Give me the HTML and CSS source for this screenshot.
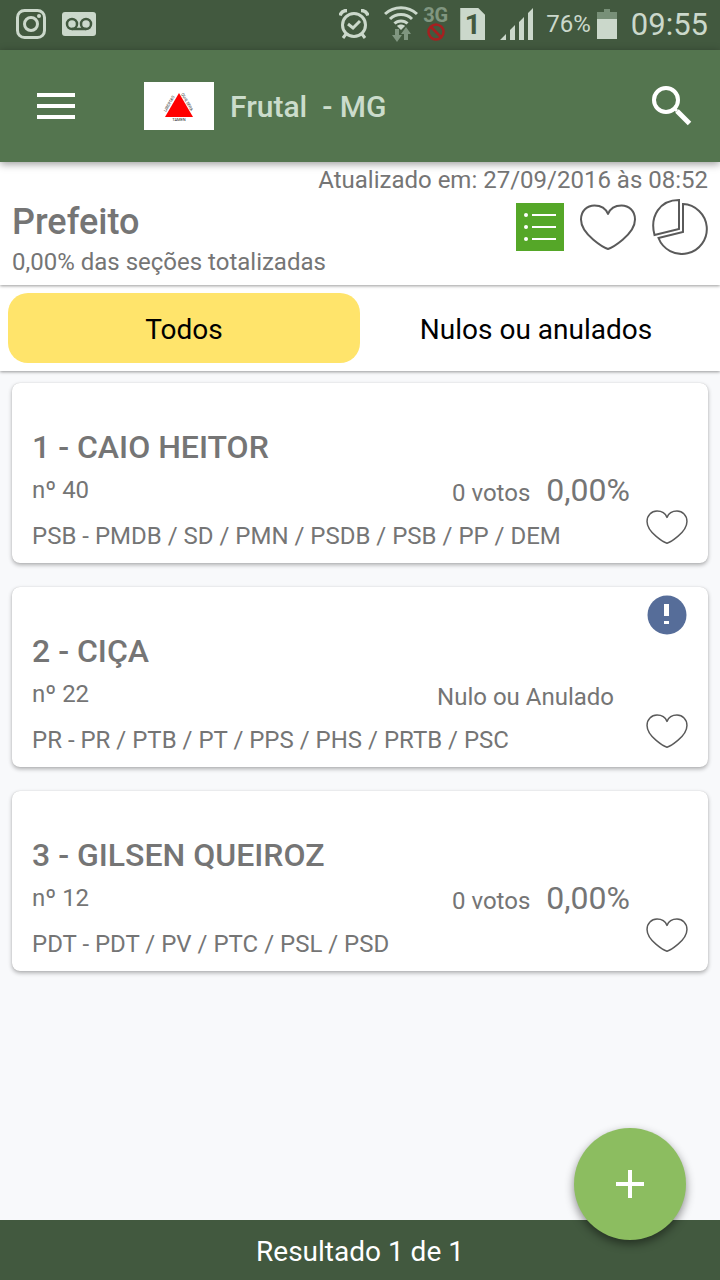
FILE: index.html
```html
<!DOCTYPE html>
<html lang="pt-BR">
<head>
    <meta charset="UTF-8">
    <meta name="viewport" content="width=device-width, initial-scale=1.0">
    <title>Frutal - MG</title>
    <link rel="stylesheet" href="styles.css">
</head>
<body>
    <svg width="0" height="0" class="defs">
        <symbol id="heart" viewBox="0 0 56 46">
            <path d="M28 45 C25 44 1 31 1 15.500 C1 7 7 1.500 14.500 1.500 C21 1.500 26 5 28 10 C30 5 35 1.500 41.500 1.500 C49 1.500 55 7 55 15.500 C55 31 31 44 28 45 Z" fill="none" stroke="#5a5a5a" stroke-width="2" stroke-linejoin="round"/>
        </symbol>
    </svg>

    <div class="status-bar">
        <div class="status-left">
            <svg width="30" height="30" viewBox="0 0 30 30" fill="none" stroke="#cbd8cb">
                <rect x="1.500" y="1.500" width="27" height="27" rx="7" stroke-width="3"/>
                <circle cx="15" cy="15" r="6.500" stroke-width="3"/>
                <circle cx="23" cy="7" r="2" fill="#cbd8cb" stroke="none"/>
            </svg>
            <svg width="34" height="24" viewBox="0 0 34 24" fill="none">
                <rect width="34" height="24" rx="3" fill="#cbd8cb"/>
                <g stroke="#42593f" stroke-width="2.500">
                    <circle cx="10" cy="12" r="5"/>
                    <circle cx="24" cy="12" r="5"/>
                    <path d="M10 17 H24"/>
                </g>
            </svg>
        </div>
        <div class="status-right">
            <svg class="alarm" width="30" height="30" viewBox="0 0 30 30" fill="none" stroke="#cbd8cb" stroke-width="3">
                <circle cx="15" cy="16" r="11.500"/>
                <path d="M9 15 L14 19 L21 12"/>
                <path d="M1 6.500 C2 3.500 4.500 1.500 8 1.500 M29 6.500 C28 3.500 25.500 1.500 22 1.500" stroke-width="3.500"/>
                <path d="M7 25 L4 29 M23 25 L26 29"/>
            </svg>
            <svg class="wifi" width="34" height="36" viewBox="0 0 34 36" fill="none" stroke="#cbd8cb" stroke-width="3">
                <path d="M1 8 C10 -0.500 24 -0.500 33 8"/>
                <path d="M6 13 C12 7 22 7 28 13"/>
                <path d="M10.500 17.500 C14 14 20 14 23.500 17.500"/>
                <path d="M13 20 C15 18 19 18 21 20 L17 24 Z" fill="#cbd8cb" stroke="none"/>
                <path d="M11 23 V29 H8 L13 36 L18 29 H15 V23 Z M20 34 V28 H17 L22 21 L27 28 H24 V34 Z" fill="#809680" stroke="none"/>
            </svg>
            <div class="network">
                <span>3G</span>
                <svg width="18" height="18" viewBox="0 0 18 18" fill="none" stroke="#a52020" stroke-width="2.500">
                    <circle cx="9" cy="9" r="7.500"/>
                    <path d="M4 4 L14 14"/>
                </svg>
            </div>
            <div class="sim">1</div>
            <svg class="signal" width="34" height="32" viewBox="0 0 34 32" fill="#cbd8cb">
                <path d="M0 32 L6 26 V32 Z M10 22 L15 17 V32 H10 Z M19 14 L24 9 V32 H19 Z M28 5 L33 0 V32 H28 Z"/>
            </svg>
            <span class="battery-level">76%</span>
            <svg class="battery" width="20" height="30" viewBox="0 0 20 30">
                <path d="M0 3 H7 V0 H13 V3 H20 V10 H0 Z" fill="#789078"/>
                <rect y="10" width="20" height="20" fill="#cbd8cb"/>
            </svg>
            <span class="clock">09:55</span>
        </div>
    </div>

    <header class="app-bar">
        <button class="icon-button" aria-label="Menu">
            <svg width="38" height="26" viewBox="0 0 38 26" fill="#fff">
                <path d="M0 0 H38 V4 H0 Z M0 11 H38 V15 H0 Z M0 22 H38 V26 H0 Z"/>
            </svg>
        </button>
        <svg class="flag" width="70" height="48" viewBox="0 0 70 48">
            <rect width="70" height="48" fill="#fff"/>
            <path d="M35 11 L49 35 H21 Z" fill="#f00"/>
            <text x="35" y="39" text-anchor="middle" class="motto">TAMEN</text>
            <text transform="translate(22 30) rotate(-60)" class="motto">LIBERTAS</text>
            <text transform="translate(37 12) rotate(60)" class="motto">QUÆ SERA</text>
        </svg>
        <h1 class="city">Frutal  - MG</h1>
        <button class="icon-button search" aria-label="Buscar">
            <svg width="40" height="40" viewBox="0 0 40 40" fill="none" stroke="#fff">
                <circle cx="14" cy="14" r="12" stroke-width="4"/>
                <path d="M22 22 L25 25" stroke-width="3"/>
                <path d="M25 25 L37.500 37.500" stroke-width="5"/>
            </svg>
        </button>
    </header>

    <section class="summary">
        <p class="updated">Atualizado em: 27/09/2016 às 08:52</p>
        <div class="summary-row">
            <div>
                <h2 class="office">Prefeito</h2>
                <p class="sections">0,00% das seções totalizadas</p>
            </div>
            <div class="views">
                <button class="icon-button" aria-label="Lista">
                    <svg width="48" height="48" viewBox="0 0 48 48">
                        <rect width="48" height="48" fill="#55a728"/>
                        <g fill="#fff">
                            <circle cx="10" cy="12" r="2"/>
                            <circle cx="10" cy="24" r="2"/>
                            <circle cx="10" cy="36" r="2"/>
                            <path d="M16 11 H40 V13 H16 Z M16 23 H40 V25 H16 Z M16 35 H40 V37 H16 Z"/>
                        </g>
                    </svg>
                </button>
                <button class="icon-button" aria-label="Favoritos">
                    <svg width="56" height="46"><use href="#heart"/></svg>
                </button>
                <button class="icon-button" aria-label="Gráfico">
                    <svg width="56" height="56" viewBox="0 0 56 56" fill="none" stroke="#5a5a5a" stroke-width="2">
                        <path d="M27 1 V30 L2.500 36 C-2.500 17 8 1 27 1 Z"/>
                        <path d="M31 5 A25 25 0 1 1 6.500 39 L31 33 Z"/>
                    </svg>
                </button>
            </div>
        </div>
    </section>

    <nav class="tabs">
        <button class="tab active">Todos</button>
        <button class="tab">Nulos ou anulados</button>
    </nav>

    <main class="candidates">
        <article class="card">
            <div class="card-body">
                <h3 class="name">1 - CAIO HEITOR</h3>
                <div class="card-row">
                    <span>nº 40</span>
                    <div class="votes"><span class="count">0 votos</span>0,00%</div>
                </div>
                <p class="parties">PSB - PMDB / SD / PMN / PSDB / PSB / PP / DEM</p>
            </div>
            <div class="card-side">
                <button class="icon-button favorite" aria-label="Favoritar Caio Heitor">
                    <svg width="42" height="34"><use href="#heart"/></svg>
                </button>
            </div>
        </article>

        <article class="card">
            <div class="card-body">
                <h3 class="name">2 - CIÇA</h3>
                <div class="card-row">
                    <span>nº 22</span>
                    <div class="votes annulled"><span>Nulo ou Anulado</span></div>
                </div>
                <p class="parties">PR - PR / PTB / PT / PPS / PHS / PRTB / PSC</p>
            </div>
            <div class="card-side">
                <svg class="alert" width="40" height="40" viewBox="0 0 40 40">
                    <circle cx="20" cy="20" r="19.500" fill="#566d99"/>
                    <path d="M17 9 H22 V21 H17 Z M17 26 H22 V29 H17 Z" fill="#fff"/>
                </svg>
                <button class="icon-button favorite" aria-label="Favoritar Ciça">
                    <svg width="42" height="34"><use href="#heart"/></svg>
                </button>
            </div>
        </article>

        <article class="card">
            <div class="card-body">
                <h3 class="name">3 - GILSEN QUEIROZ</h3>
                <div class="card-row">
                    <span>nº 12</span>
                    <div class="votes"><span class="count">0 votos</span>0,00%</div>
                </div>
                <p class="parties">PDT - PDT / PV / PTC / PSL / PSD</p>
            </div>
            <div class="card-side">
                <button class="icon-button favorite" aria-label="Favoritar Gilsen Queiroz">
                    <svg width="42" height="34"><use href="#heart"/></svg>
                </button>
            </div>
        </article>
    </main>

    <footer class="footer">
        Resultado 1 de 1
        <button class="add" aria-label="Adicionar">
            <svg width="28" height="28" viewBox="0 0 28 28" fill="#fff">
                <path d="M12 0 H16 V12 H28 V16 H16 V28 H12 V16 H0 V12 H12 Z"/>
            </svg>
        </button>
    </footer>
</body>
</html>
```

FILE: styles.css
```css
* {
    box-sizing: border-box;
}
body {
    margin: 0;
    min-height: 100vh;
    display: flex;
    flex-direction: column;
    font-family: Roboto, "Liberation Sans", sans-serif;
    font-size: 24px;
    color: #757575;
    background-color: #f8f9fb;
}
h1, h2, h3, p {
    margin: 0;
    font-weight: 500;
}
p {
    font-weight: 400;
}
svg {
    display: block;
}
button {
    font-family: inherit;
    border: none;
    cursor: pointer;
}
.defs {
    position: absolute;
}
.icon-button {
    padding: 0;
    background: none;
}

/* status bar */
.status-bar {
    display: flex;
    justify-content: space-between;
    align-items: center;
    height: 50px;
    padding: 0 12px 2px 16px;
    background-color: #42593f;
    color: #cbd8cb;
}
.status-left, .status-right {
    display: flex;
    align-items: center;
    gap: 16px;
}
.status-right {
    gap: 12px;
}
.wifi {
    margin-left: 3px;
}
.network {
    display: flex;
    flex-direction: column;
    align-items: center;
    margin-left: -7px;
    font-size: 20px;
    font-weight: 700;
    line-height: 16px;
    color: #809680;
}
.sim {
    width: 25px;
    height: 32px;
    background-color: #cbd8cb;
    clip-path: polygon(0 0, 18px 0, 100% 7px, 100% 100%, 0 100%);
    font-size: 28px;
    font-weight: 700;
    line-height: 34px;
    text-align: center;
    color: #42593f;
}
.signal {
    margin-left: 3px;
}
.battery {
    margin-left: -6px;
}
.clock {
    margin-left: 2px;
    font-size: 31px;
}

/* app bar */
.app-bar {
    position: relative;
    display: flex;
    align-items: center;
    height: 112px;
    padding: 0 28px 0 37px;
    background-color: #54754f;
    box-shadow: 0 2px 8px rgba(0, 0, 0, 0.4);
    z-index: 1;
}
.flag {
    margin-left: 69px;
}
.motto {
    font-size: 4px;
    fill: #222;
}
.city {
    margin-left: 16px;
    font-size: 30px;
    white-space: pre;
    color: #cbdccb;
}
.search {
    margin-left: auto;
}

/* summary */
.summary {
    position: relative;
    padding: 4px 12px 11px;
    background-color: #fff;
    box-shadow: 0 1px 3px rgba(0, 0, 0, 0.4);
}
.updated {
    line-height: 28px;
    text-align: right;
}
.summary-row {
    display: flex;
    justify-content: space-between;
    align-items: flex-start;
}
.office {
    font-size: 36px;
    line-height: 56px;
}
.sections {
    line-height: 24px;
}
.views {
    display: flex;
    align-items: center;
    gap: 16px;
    padding-top: 5px;
}

/* tabs */
.tabs {
    display: flex;
    padding: 8px;
    background-color: #fff;
    box-shadow: 0 1px 3px rgba(0, 0, 0, 0.4);
}
.tab {
    flex: 1;
    height: 70px;
    padding: 2px 0 0;
    border-radius: 20px;
    background: none;
    font-size: 28px;
    color: #000;
}
.tab.active {
    background-color: #ffe46b;
}

/* candidates */
.candidates {
    flex: 1;
    display: flex;
    flex-direction: column;
    gap: 24px;
    padding: 12px;
}
.card {
    display: flex;
    gap: 16px;
    padding: 0 20px;
    border-radius: 8px;
    background-color: #fff;
    box-shadow: 0 2px 4px rgba(0, 0, 0, 0.3), 0 0 1px rgba(0, 0, 0, 0.2);
}
.card-body {
    flex: 1;
    padding: 44px 0 4px;
}
.name {
    font-size: 32px;
    line-height: 40px;
}
.card-row {
    display: flex;
    justify-content: space-between;
    height: 46px;
    line-height: 46px;
}
.votes {
    font-size: 32px;
}
.votes span {
    font-size: 24px;
}
.count {
    margin-right: 16px;
}
.annulled {
    padding-right: 16px;
}
.parties {
    line-height: 46px;
}
.card-side {
    display: flex;
    flex-direction: column;
    width: 42px;
    padding: 8px 0 19px;
}
.alert {
    align-self: center;
}
.favorite {
    margin-top: auto;
}

/* footer */
.footer {
    position: relative;
    height: 60px;
    line-height: 64px;
    text-align: center;
    font-size: 28px;
    color: #fff;
    background-color: #42593f;
}
.add {
    position: absolute;
    right: 34px;
    bottom: 40px;
    display: flex;
    justify-content: center;
    align-items: center;
    width: 112px;
    height: 112px;
    border-radius: 50%;
    background-color: #8cbd60;
    box-shadow: 0 4px 10px rgba(0, 0, 0, 0.45);
}
```
